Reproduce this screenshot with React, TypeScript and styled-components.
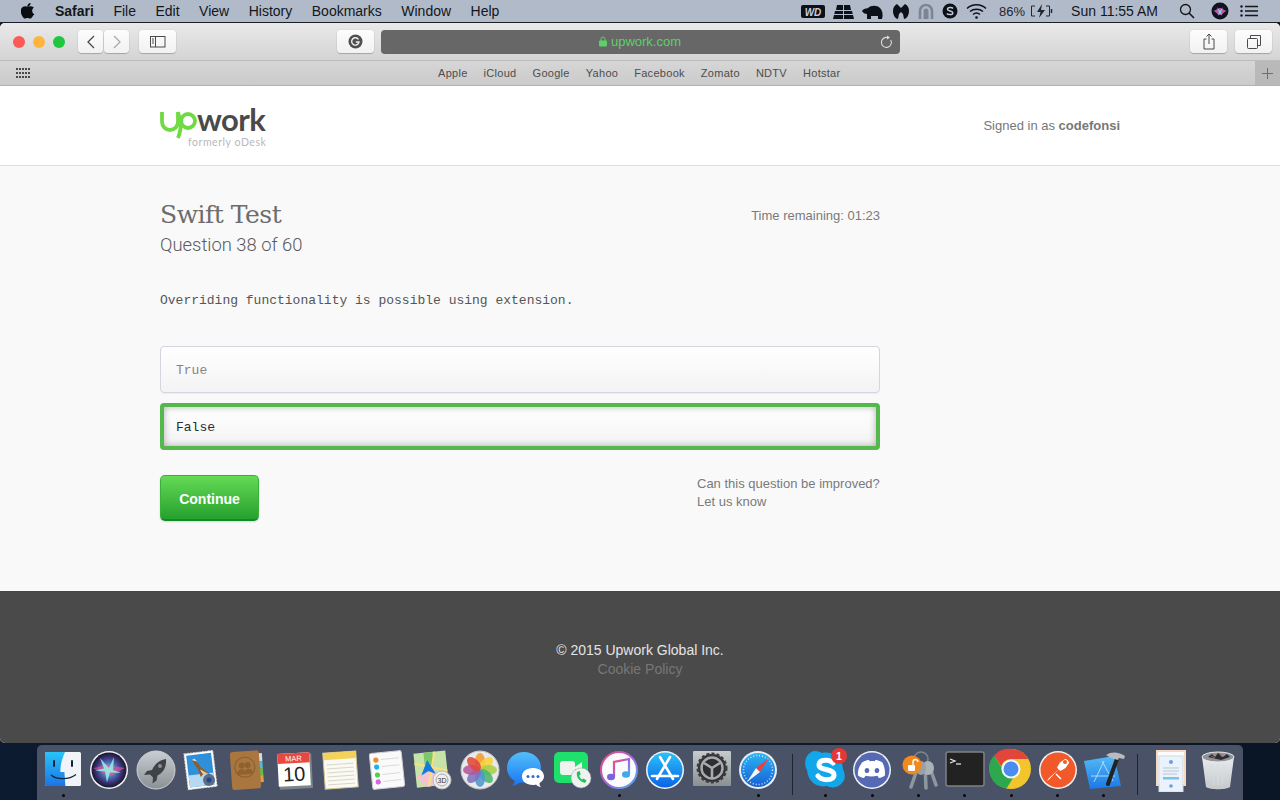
import React from 'react';
import styled, { createGlobalStyle } from 'styled-components';

const Global = createGlobalStyle`
  html, body { margin: 0; padding: 0; width: 1280px; height: 800px; overflow: hidden; }
  body { background: #0c1a2c; font-family: "Liberation Sans", Arial, sans-serif; }
  * { box-sizing: border-box; }
`;

const Screen = styled.div`
  width: 1280px; height: 800px; display: flex; flex-direction: column;
  background: linear-gradient(100deg, #0b1a2e 0%, #0d1c30 50%, #0a1526 100%);
  overflow: hidden;
`;

/* ---------- menu bar ---------- */
const MenuBar = styled.header`
  height: 22px; flex: none; display: flex; align-items: center;
  background: #b1bac9; color: #14161a; font-size: 14px; padding: 0 22px 0 21px;
  border-bottom: 1px solid #1b1e24;
  box-sizing: content-box;
`;
const MenuList = styled.nav`display: flex; align-items: center; gap: 19.5px; margin-left: 20px;`;
const MenuItem = styled.span<{ $strong?: boolean }>`
  font-weight: ${p => (p.$strong ? 700 : 400)};
  white-space: nowrap;
`;
const StatusArea = styled.div`margin-left: auto; display: flex; align-items: center; gap: 8px;`;
const StatusText = styled.span`font-size: 13px; color: #23262c; white-space: nowrap; margin: 0 -3px 0 4px;`;
const Clock = styled.span`font-size: 14px; color: #14161a; margin: 0 13px 0 10px; white-space: nowrap;`;
const SiriMark = styled.svg`margin: 0 3px 0 8px;`;

/* ---------- window ---------- */
const Window = styled.div`
  height: 720px; flex: none; display: flex; flex-direction: column;
  border-radius: 5px 5px 5px 5px; overflow: hidden; background: #f9f9f9;
`;
const Toolbar = styled.div`
  height: 38px; flex: none; display: flex; align-items: center; padding: 0 8px 0 13px;
  background: linear-gradient(#e9e9e9, #d4d4d4);
  border-bottom: 1px solid #bdbdbd;
`;
const Lights = styled.div`display: flex; gap: 8px; margin-right: 13px;`;
const Light = styled.span<{ $c: string }>`
  width: 12px; height: 12px; border-radius: 50%; background: ${p => p.$c};
`;
const ToolButton = styled.button<{ $w?: number; $ml?: number }>`
  width: ${p => p.$w ?? 37}px; height: 23px; margin: 0 0 0 ${p => p.$ml ?? 0}px; padding: 0;
  display: flex; align-items: center; justify-content: center;
  background: linear-gradient(#fdfdfd, #f1f1f1); border: 0; border-radius: 4px;
  box-shadow: 0 1px 1px rgba(0,0,0,.22), 0 0 0 .5px rgba(0,0,0,.06);
`;
const AddressBar = styled.div`
  width: 519px; height: 24px; margin-left: 7px; position: relative; flex: none;
  display: flex; align-items: center; justify-content: center; gap: 3px; padding-right: 2px;
  background: #676767; border-radius: 4px; color: #5fd068; font-size: 13px;
`;
const Reload = styled.span`position: absolute; right: 6px; top: 5px; display: flex;`;

const BookmarkBar = styled.div`
  height: 25px; flex: none; display: flex; align-items: center; position: relative;
  background: linear-gradient(#d6d6d6, #cbcbcb); border-bottom: 1px solid #b2b2b2;
  padding-left: 16px;
`;
const Bookmarks = styled.div`
  display: flex; gap: 16px; margin-left: 408px; font-size: 11px; color: #4d4d4d; letter-spacing: .29px;
`;
const AddTab = styled.div`
  margin-left: auto; width: 25px; height: 100%; background: #b9b9b9;
  display: flex; align-items: center; justify-content: center;
`;

/* ---------- page ---------- */
const Page = styled.main`flex: 1; display: flex; flex-direction: column; min-height: 0;`;
const SiteHeader = styled.div`
  height: 80px; flex: none; background: #fff; border-bottom: 1px solid #dedede;
  display: flex; align-items: center; justify-content: space-between; padding: 0 160px;
`;
const Logo = styled.div`position: relative; width: 108px; height: 44px; margin-top: 4px;`;
const LogoMark = styled.svg`position: absolute; left: 0; top: 0;`;
const LogoWord = styled.span`
  position: absolute; left: 37px; top: 1px; font: 700 31px/24px "Lato", "Noto Sans", sans-serif;
  color: #4a4a4a; letter-spacing: -.6px;
`;
const LogoSub = styled.span`
  position: absolute; left: 28px; top: 29px; font: 400 10.5px/14px "Lato", "Noto Sans", sans-serif;
  color: #b9b9b9; letter-spacing: .55px; white-space: nowrap;
`;
const Signed = styled.div`font-size: 13px; color: #777; margin-top: -1px;`;
const Body = styled.section`
  flex: 1; background: #f9f9f9; padding: 31px 0 0 160px;
`;
const Column = styled.div`width: 720px;`;
const TitleRow = styled.div`display: flex; justify-content: space-between; align-items: flex-start;`;
const Title = styled.h1`
  margin: 0; font: 400 25px/35px "DejaVu Serif", serif; color: #6c6c6c; letter-spacing: -.5px;
`;
const Subtitle = styled.h2`
  margin: 0; font: 300 18.4px/25px "Roboto", "Liberation Sans", sans-serif; color: #5a5a5a;
`;
const Timer = styled.div`font-size: 13px; line-height: 16px; color: #7a7a7a; margin-top: 11px;`;
const Prompt = styled.p`
  margin: 36px 0 0; font: 400 13px/16px "Liberation Mono", monospace; color: #555;
`;
const Options = styled.div`margin-top: 37px; display: flex; flex-direction: column; gap: 10px;`;
const Option = styled.div<{ $selected?: boolean }>`
  height: 47px; display: flex; align-items: center; padding: 2px 0 0 ${p => (p.$selected ? 12 : 15)}px;
  font: 400 13px/16px "Liberation Mono", monospace;
  border-radius: 4px;
  color: ${p => (p.$selected ? '#2b2b2b' : '#858585')};
  background: linear-gradient(#ffffff, #f3f3f3);
  border: ${p => (p.$selected ? '4px solid #55b84d' : '1px solid #d3d6de')};
  box-shadow: ${p => (p.$selected ? 'inset 0 0 7px rgba(0,0,0,.3)' : '0 1px 1px rgba(0,0,0,.05)')};
`;
const ActionRow = styled.div`margin-top: 25px; display: flex; justify-content: space-between; align-items: flex-start;`;
const Continue = styled.button`
  width: 99px; height: 46px; border: 1px solid #3cae3c; border-bottom: 2px solid #128a28; border-radius: 5px;
  background: linear-gradient(#65da55, #26a02e); color: #fff; padding: 2px 0 0;
  font: 700 14px/1 "Liberation Sans", sans-serif;
  box-shadow: 0 1px 2px rgba(0,0,0,.15);
`;
const Help = styled.div`
  width: 183px; font-size: 13px; line-height: 18px; color: #7a7a7a; white-space: nowrap;
`;
const Footer = styled.footer`
  height: 152px; flex: none; background: #4a4a4a; text-align: center; padding-top: 49px;
  font-size: 14px; line-height: 19px; color: #e4e4e4;
  border-top: 1px solid #454545;
`;
const FooterLink = styled.div`color: #777;`;

/* ---------- dock ---------- */
const DockRow = styled.div`flex: 1; display: flex; justify-content: center; align-items: flex-end;`;
const Dock = styled.nav`
  width: 1206px; height: 55px; display: flex; align-items: flex-start; padding: 3px 3px 0;
  background: #4a5268; border-radius: 5px 5px 0 0;
`;
const Slot = styled.div<{ $open?: boolean }>`
  width: 46.33px; flex: none; height: 52px; position: relative; display: flex; justify-content: center;
  &::after {
    content: ''; display: ${p => (p.$open ? 'block' : 'none')};
    position: absolute; left: 50%; bottom: 3px; width: 3px; height: 3px; margin-left: -1.5px; border-radius: 50%; background: #050505;
  }
`;
const DockDivider = styled.div`
  width: 21.5px; height: 41px; flex: none; margin-top: 6px; display: flex; justify-content: center;
  &::before { content: ''; width: 1px; background: #1f2431; }
`;

const I = ({ children, w = 44, h = 44, vb }: { children: React.ReactNode; w?: number; h?: number; vb?: string }) => (
  <svg width={w} height={h} viewBox={vb ?? `0 0 ${w} ${h}`} fill="none">{children}</svg>
);

const Finder = () => (
  <I>
    <defs><linearGradient id="fa" x1="0" y1="0" x2="0" y2="1"><stop offset="0" stopColor="#28c4f6" /><stop offset="1" stopColor="#1b74e8" /></linearGradient></defs>
    <rect x="4" y="4" width="36" height="34" rx="1.5" fill="#f0f4f8" />
    <path d="M4 5.5A1.5 1.5 0 0 1 5.500 4H24c-3 7-5 14-4.600 20h4l1 14H5.500A1.500 1.500 0 0 1 4 36.500z" fill="url(#fa)" />
    <path d="M13 13v5M31 13v5" stroke="#15233a" strokeWidth="2" strokeLinecap="round" />
    <path d="M10 27c6 5 18 5 25-.5" stroke="#15233a" strokeWidth="1.300" />
  </I>
);
const Siri = () => (
  <I>
    <defs>
      <radialGradient id="si"><stop offset="0" stopColor="#9af0e8" /><stop offset=".35" stopColor="#4f7fc8" /><stop offset=".75" stopColor="#3a2f70" /><stop offset="1" stopColor="#14182c" /></radialGradient>
    </defs>
    <circle cx="22" cy="22" r="19" fill="#f2f2f2" /><circle cx="22" cy="22" r="17.500" fill="url(#si)" />
    <path d="M6 20c6 0 11-5 16-3 4 1 10 2 16 3-6 2-11 9-16 8-5-1-10-6-16-8z" fill="#e0509f" opacity=".7" />
    <path d="M13 10l9 10 5-11-1 13 8 3-11-.5-3 10-2-11-10-1 9-2z" fill="#92f3e0" opacity=".85" />
  </I>
);
const Rocket = () => (
  <I>
    <defs><linearGradient id="ro" x1="0" y1="0" x2="0" y2="1"><stop offset="0" stopColor="#c9cdd1" /><stop offset="1" stopColor="#8a9094" /></linearGradient></defs>
    <circle cx="22" cy="22" r="19" fill="url(#ro)" stroke="#cfd2d4" />
    <path d="M32 11c-7 1-11 5-14 11l-5 1-3 4 6-.5 3 3-.5 6 4-3 1-5c6-3 9-8 8.500-16.500z" fill="#3f4347" />
    <circle cx="26" cy="18" r="2" fill="#8b9094" />
  </I>
);
const Mail = () => (
  <I>
    <g transform="rotate(-7 21 22)">
      <rect x="6" y="4" width="29" height="36" fill="#fff" stroke="#d8d8d8" strokeDasharray="2 1" />
      <rect x="8" y="6" width="25" height="32" fill="#2f8fd8" />
      <rect x="8" y="26" width="25" height="12" fill="#b6d8f0" />
      <path d="M13 11c3 1 6 3 8 8l9 9-7-2-3 3-2-8z" fill="#8f5a2c" />
      <path d="M13 11l3-1 2 3z" fill="#f0e4c8" />
      <path d="M20 21l8 6-6-1z" fill="#e8d2a6" />
    </g>
    <circle cx="29" cy="32" r="6" fill="#3a4a68" opacity=".75" />
    <circle cx="29" cy="32" r="2.500" fill="#20468c" />
  </I>
);
const Contacts = () => (
  <I>
    <g transform="rotate(-4 22 22)">
      <rect x="33" y="6" width="4" height="8" fill="#d8d8d8" /><rect x="33" y="14" width="4" height="7" fill="#5bb6ce" />
      <rect x="33" y="21" width="4" height="7" fill="#70b54a" /><rect x="33" y="28" width="4" height="7" fill="#e0a23c" />
      <rect x="5" y="3" width="29" height="38" rx="2.500" fill="#a9763f" />
      <circle cx="19" cy="19" r="10" stroke="#8f6030" strokeWidth="1.200" />
      <circle cx="16" cy="17" r="3" fill="#8f6030" /><circle cx="22" cy="17" r="3" fill="#8f6030" />
      <path d="M11 26c0-7 9-7 9 0zM18 26c0-7 9-7 9 0z" fill="#8f6030" />
    </g>
  </I>
);
const Calendar = () => (
  <I>
    <g transform="rotate(-3 22 22)">
      <rect x="6" y="6" width="33" height="35" fill="#7c8589" />
      <rect x="5" y="5" width="32" height="33" fill="#fff" />
      <rect x="5" y="5" width="32" height="10" fill="#e8483f" />
      <text x="21" y="13" textAnchor="middle" fontFamily="Liberation Sans" fontSize="7.500" fill="#fff">MAR</text>
      <text x="21" y="33" textAnchor="middle" fontFamily="Liberation Sans" fontSize="20" fill="#222">10</text>
    </g>
  </I>
);
const Notes = () => (
  <I>
    <g transform="rotate(-4 22 22)">
      <rect x="5" y="4" width="33" height="36" fill="#fbfaf2" stroke="#d3c692" />
      <rect x="5" y="4" width="33" height="7" fill="#f4d15a" />
      <path d="M8 16h27M8 20h27M8 24h27M8 28h27M8 32h27M8 36h27" stroke="#c9c7bb" strokeWidth=".7" />
    </g>
  </I>
);
const Reminders = () => (
  <I>
    <g transform="rotate(-6 22 22)">
      <rect x="6" y="4" width="32" height="36" rx="2" fill="#fafafa" stroke="#cfcfcf" />
      <circle cx="12" cy="11" r="2.600" fill="#f08a2a" /><circle cx="12" cy="18" r="2.600" fill="#1eb2ee" />
      <circle cx="12" cy="26" r="2.600" fill="#4fd04a" /><circle cx="12" cy="33" r="2.600" fill="#d268dc" />
      <path d="M17 11h18M17 18h18M17 26h18M17 33h18" stroke="#dadada" />
    </g>
  </I>
);
const Maps = () => (
  <I>
    <g transform="rotate(-6 20 20)">
      <rect x="3" y="4" width="32" height="34" fill="#c6e4a8" />
      <path d="M13 4h9v15H13z" fill="#7ec86c" /><path d="M3 28L22 16l4 22H12z" fill="#f2c4cf" />
      <path d="M3 14l32 10M24 4L15 38" stroke="#f7e27e" strokeWidth="2" />
      <path d="M16 15l4 8-4-2-4 2z" fill="#1478e0" stroke="#1478e0" strokeWidth="3" />
    </g>
    <circle cx="30" cy="32" r="9" fill="#eee" stroke="#bbb" />
    <circle cx="30" cy="32" r="6" stroke="#aaa" />
    <text x="30" y="35" textAnchor="middle" fontFamily="Liberation Sans" fontSize="7" fill="#333">3D</text>
  </I>
);
const Photos = () => (
  <I>
    <circle cx="22" cy="22" r="19" fill="#e9e9e9" stroke="#c4c4c4" />
    {['#f59a2c','#f7d13c','#a8cf48','#4bb56c','#4d97d2','#7b73bf','#b4579c','#e0483c'].map((c, i) => (
      <ellipse key={c} cx="22" cy="13.500" rx="5" ry="8.500" fill={c} opacity=".88" transform={`rotate(${i * 45} 22 22)`} />
    ))}
  </I>
);
const Messages = () => (
  <I>
    <defs><linearGradient id="me" x1="0" y1="0" x2="0" y2="1"><stop offset="0" stopColor="#52c0fb" /><stop offset="1" stopColor="#1a76f2" /></linearGradient></defs>
    <path d="M20 4C10 4 3 11 3 20c0 6 3 10 8 13-.5 2-2 3.500-3 4.500 4 0 6-1.500 8-3 8 1.500 21-3 21-14.500C37 11 30 4 20 4z" fill="url(#me)" />
    <path d="M29 20c-7 0-11 4-11 8.500S22 37 29 37c1 0 2 0 3-.5 1 1.500 3 2.500 5 2.500-1-1-1.500-2-1.500-4 2.500-1.500 4.500-3.500 4.500-6.500C40 24 36 20 29 20z" fill="#fff" />
    <circle cx="24" cy="28.500" r="1.500" fill="#2a6bd8" /><circle cx="29" cy="28.500" r="1.500" fill="#2a6bd8" /><circle cx="34" cy="28.500" r="1.500" fill="#2a6bd8" />
  </I>
);
const FaceTime = () => (
  <I>
    <rect x="3" y="4" width="34" height="31" rx="5" fill="#1ee06a" />
    <rect x="9" y="13" width="15" height="14" rx="3" fill="#eef3ef" />
    <path d="M24 19l7-5v12l-7-5z" fill="#eef3ef" />
    <circle cx="30" cy="30" r="10" fill="#f0f2f0" stroke="#9ca3a0" strokeWidth=".5" />
    <path d="M26 24c-1 5 2 9 8 11l1.500-2.500-3-2-1.500 1c-1.500-1-2.500-2.500-2.800-4l1.500-1-1-3.500z" fill="#23c15a" />
  </I>
);
const Music = () => (
  <I>
    <defs><linearGradient id="mu" x1="0" y1="0" x2="1" y2="1"><stop offset="0" stopColor="#f0506e" /><stop offset=".5" stopColor="#a95fe0" /><stop offset="1" stopColor="#44b6f0" /></linearGradient></defs>
    <circle cx="22" cy="22" r="18" fill="#fbfbfb" stroke="url(#mu)" strokeWidth="2" />
    <path d="M17 29V14l15-3v15" stroke="url(#mu)" strokeWidth="2.200" />
    <ellipse cx="14" cy="29" rx="4" ry="3.300" fill="#7a63d8" /><ellipse cx="29" cy="26.500" rx="4" ry="3.300" fill="#44a6ec" />
  </I>
);
const AppStore = () => (
  <I>
    <defs><linearGradient id="ap" x1="0" y1="0" x2="0" y2="1"><stop offset="0" stopColor="#2ac2fa" /><stop offset="1" stopColor="#0b63e6" /></linearGradient></defs>
    <circle cx="22" cy="22" r="19" fill="#f0f4f8" /><circle cx="22" cy="22" r="17.500" fill="url(#ap)" />
    <path d="M27 9L14 31M17 9l13 22M9 28h26" stroke="#fff" strokeWidth="2.600" strokeLinecap="round" />
  </I>
);
const Prefs = () => (
  <I>
    <defs><linearGradient id="pr" x1="0" y1="0" x2="0" y2="1"><stop offset="0" stopColor="#c6cbcd" /><stop offset="1" stopColor="#8b9193" /></linearGradient></defs>
    <rect x="3" y="3" width="38" height="35" rx="1" fill="url(#pr)" />
    <circle cx="22" cy="20" r="14" fill="#2f2f31" stroke="#3c3c3e" strokeWidth="3" strokeDasharray="3 2" />
    <circle cx="22" cy="20" r="10.500" stroke="#a7abad" strokeWidth="2.500" />
    <path d="M22 20l-8-5M22 20l8-5M22 20v10" stroke="#a7abad" strokeWidth="2.600" />
  </I>
);
const SafariIcon = () => (
  <I>
    <defs><linearGradient id="sa" x1="0" y1="0" x2="0" y2="1"><stop offset="0" stopColor="#2cb4f4" /><stop offset="1" stopColor="#1560d4" /></linearGradient></defs>
    <circle cx="22" cy="22" r="19" fill="#e8eef2" /><circle cx="22" cy="22" r="17" fill="url(#sa)" />
    <circle cx="22" cy="22" r="14.500" stroke="#cfe6f8" strokeWidth="1.500" strokeDasharray="1 2" />
    <path d="M33 10L20 20l4 4z" fill="#ee4036" /><path d="M11 34l13-10-4-4z" fill="#f5f5f5" />
  </I>
);
const SkypeIcon = () => (
  <I w={46} h={44}>
    <g transform="translate(1 0)">
      <path d="M11 3c3 0 5 1 7 2 9-2 20 3 21 16 3 7 2 11-1 14-3 4-9 6-15 3-10 2-19-4-20-16-3-5-2-10 0-14 2-3 5-5 8-5z" fill="#11a7ea" />
      <path d="M29 15c-3-4-14-4-14 2 0 6 15 3 15 10 0 6-12 6-16 1" stroke="#fff" strokeWidth="5" strokeLinecap="round" />
      <circle cx="35" cy="8" r="8" fill="#e43838" />
      <text x="35" y="12" textAnchor="middle" fontFamily="Liberation Sans" fontSize="10.500" fontWeight="700" fill="#fff">1</text>
    </g>
  </I>
);
const Discord = () => (
  <I>
    <circle cx="22" cy="22" r="19" fill="#f0f2f6" /><circle cx="22" cy="22" r="17.500" fill="#5669b4" />
    <path d="M12 15c3-2 6-2.500 7-2.500l.7 1.300c2-.3 3-.3 5 0l.7-1.300c1 0 4 .5 7 2.500 2 4 3 8 2.500 13-2 1.500-4 2.300-6 2.500l-1.500-2.300c-4 1-8 1-11.800 0L14 30.500c-2-.2-4-1-6-2.500-.5-5 1-9 4-13z" fill="#fff" transform="translate(0 -.5)" />
    <ellipse cx="17" cy="22.500" rx="2.300" ry="2.600" fill="#5669b4" /><ellipse cx="27" cy="22.500" rx="2.300" ry="2.600" fill="#5669b4" />
  </I>
);
const Keys = () => (
  <I>
    <circle cx="24" cy="11" r="7" stroke="#7d8790" strokeWidth="1.500" />
    <path d="M22 16l-8 23M28 17l1 23M32 17l7 20" stroke="#8e979e" strokeWidth="3.500" strokeLinecap="round" />
    <ellipse cx="31" cy="20" rx="6" ry="7" fill="#aab2b8" />
    <ellipse cx="24" cy="20" rx="5" ry="7" fill="#98a1a8" />
    <circle cx="15" cy="17" r="9.500" fill="#f08a1e" />
    <rect x="11" y="17" width="7" height="6" rx="1" fill="#fff" />
    <path d="M16 17v-3a2.500 2.500 0 0 1 5 0" stroke="#fff" strokeWidth="1.300" />
  </I>
);
const Terminal = () => (
  <I>
    <rect x="3" y="4" width="38" height="34" rx="2" fill="#222" stroke="#7d8385" strokeWidth="1.500" />
    <path d="M7 11l5 2-5 2" stroke="#eee" strokeWidth="1.200" />
    <path d="M13 16h5" stroke="#eee" strokeWidth="1.200" />
  </I>
);
const Chrome = () => (
  <I>
    <circle cx="22" cy="21" r="20" fill="#f3c52c" />
    <path d="M22 1a20 20 0 0 1 17.300 10H22a10 10 0 0 0-9.700 7.500L5 7.500A20 20 0 0 1 22 1z" fill="#e2463a" />
    <path d="M5 7.500a20 20 0 0 0 12.500 33l7.500-12a10 10 0 0 1-12.700-9.500z" fill="#2da84f" />
    <circle cx="22" cy="21" r="9.500" fill="#f6f6f6" /><circle cx="22" cy="21" r="7.500" fill="#4a8cf0" />
  </I>
);
const Postman = () => (
  <I>
    <circle cx="22" cy="22" r="19" fill="#f2f2f2" /><circle cx="22" cy="22" r="17.500" fill="#f1592a" />
    <path d="M11 33l1.500-2.500 10-9-1.500-2 3-5 5-3.500c2 0 4 2 4 4l-3.500 5-5 3-2-1.500-9.500 10z" fill="#fff" />
    <circle cx="29" cy="14" r="2" fill="#f1592a" />
    <path d="M20 26l5 5" stroke="#fff" strokeWidth="1.400" />
  </I>
);
const Xcode = () => (
  <I>
    <defs><linearGradient id="xc" x1="0" y1="0" x2="0" y2="1"><stop offset="0" stopColor="#53baf5" /><stop offset="1" stopColor="#1b78e8" /></linearGradient></defs>
    <path d="M2 13l30-5 7 30-31 3z" fill="url(#xc)" />
    <path d="M22 13L12 34M20 13l11 20M9 28h24" stroke="#a8dcfb" strokeWidth="1" />
    <path d="M36 8L26 36" stroke="#222" strokeWidth="4" strokeLinecap="round" />
    <path d="M24 7c6-4 13-3 19 1l-1 3-5-1-1 2-7-2z" fill="#b8bcbe" />
  </I>
);
const PreviewDoc = () => (
  <I>
    <rect x="6" y="2" width="30" height="36" fill="#f6d8c4" /><rect x="8" y="4" width="26" height="32" fill="#fbfbfb" />
    <rect x="9" y="8" width="24" height="36" fill="#eaf2fb" stroke="#d2d9e2" />
    <circle cx="21" cy="14" r="2" fill="#6c9fdd" />
    <path d="M13 20h16M13 23h16M13 26h14" stroke="#bbc7d6" />
    <rect x="13" y="29" width="16" height="2.500" fill="#7cc0ee" />
    <circle cx="21" cy="38" r="1.800" fill="#6c9fdd" />
  </I>
);
const Trash = () => (
  <I>
    <defs><linearGradient id="tr" x1="0" y1="0" x2="0" y2="1"><stop offset="0" stopColor="#e8eaec" /><stop offset="1" stopColor="#c5c9cc" /></linearGradient></defs>
    <path d="M6 9l4 30c4 3 20 3 24 0l4-30z" fill="url(#tr)" />
    <ellipse cx="22" cy="9" rx="16" ry="5" fill="#8f9498" stroke="#e9ebec" />
    <path d="M12 9l4-3 3 3 3-4 5 4 4-3 3 3-9 3z" fill="#2a2d33" />
    <path d="M15 8l4 2M24 6l2 3" stroke="#c95b4c" />
    <path d="M16 16l2 21M22 16v21M28 16l-2 21" stroke="#d9dcde" />
  </I>
);

/* ---------- toolbar / status glyphs ---------- */
const AppleLogo = () => (
  <svg width="14" height="16" viewBox="0 0 170 200" fill="#0c0d10">
    <path d="M150 152c-3 7-6 13-10 19-5 8-10 13-13 16-5 5-11 7-17 7-4 0-9-1-15-4-6-2-11-4-16-4s-11 1-17 4c-6 2-10 4-14 4-6 0-12-2-18-8-4-3-9-9-14-17-6-9-11-19-15-31-4-13-6-25-6-37 0-14 3-25 9-35 5-8 11-14 19-19s16-7 25-7c5 0 11 1 19 4s13 5 15 5c2 0 7-2 17-5 9-3 16-4 23-4 16 1 29 8 37 20-15 9-22 22-22 38 0 13 5 23 14 32 4 4 9 7 14 9-1 3-3 6-5 10zM117 3c0 10-4 19-11 28-9 10-19 16-30 15v-4c0-9 4-19 11-27 4-4 8-8 14-11 6-3 11-4 16-4v3z" />
  </svg>
);
const Glyph = ({ w, children }: { w: number; children: React.ReactNode }) => (
  <svg width={w} height="18" viewBox={`0 0 ${w} 18`} fill="none">{children}</svg>
);

const bookmarks = ['Apple', 'iCloud', 'Google', 'Yahoo', 'Facebook', 'Zomato', 'NDTV', 'Hotstar'];
const menus = ['File', 'Edit', 'View', 'History', 'Bookmarks', 'Window', 'Help'];

const dockLeft: [React.FC, boolean][] = [
  [Finder, true], [Siri, false], [Rocket, false], [Mail, false], [Contacts, false], [Calendar, false], [Notes, false],
  [Reminders, false], [Maps, false], [Photos, false], [Messages, false], [FaceTime, false], [Music, true], [AppStore, false],
  [Prefs, false], [SafariIcon, true],
];
const dockMid: [React.FC, boolean][] = [
  [SkypeIcon, true], [Discord, true], [Keys, true], [Terminal, true], [Chrome, true], [Postman, true], [Xcode, true],
];
const dockRight: [React.FC, boolean][] = [[PreviewDoc, false], [Trash, false]];

const renderSlots = (list: [React.FC, boolean][]) =>
  list.map(([Icon, open], i) => (
    <Slot key={i} $open={open}><Icon /></Slot>
  ));

export default function App() {
  return (
    <Screen>
      <Global />
      <MenuBar>
        <AppleLogo />
        <MenuList>
          <MenuItem $strong>Safari</MenuItem>
          {menus.map(m => <MenuItem key={m}>{m}</MenuItem>)}
        </MenuList>
        <StatusArea>
          <Glyph w={24}>
            <rect x="0" y="3" width="24" height="13" rx="2" fill="#0c1018" />
            <text x="12" y="13.500" textAnchor="middle" fontFamily="Liberation Sans" fontSize="10" fontWeight="700" fontStyle="italic" fill="#c9ced8">WD</text>
          </Glyph>
          <Glyph w={21}>
            <path d="M4 3h13l1 5H3zM2 9h17l2 8H0z" fill="#0c1018" /><path d="M10.500 3v14M0 12.500h21" stroke="#b1bac9" strokeWidth="1" />
          </Glyph>
          <Glyph w={22}>
            <path d="M0 9c2-3 4-2 6-3 3-3 9-3 12 0 3 3 3 8 2 11h-4v-3H9v3H5v-5c-2 0-4-1-5-3z" fill="#0c1018" />
          </Glyph>
          <Glyph w={18}>
            <path d="M1 9c0-4 2-6 4-7l4 4 4-4c2 1 4 3 4 7 0 5-3 8-5 8l-1-5-2-2-2 2-1 5c-2 0-5-3-5-8z" fill="#0c1018" />
          </Glyph>
          <Glyph w={16}>
            <path d="M2 17V9a6 6 0 0 1 12 0v8" stroke="#7d8591" strokeWidth="2.600" /><path d="M5.500 17V9a2.500 2.500 0 0 1 5 0v8z" fill="#7d8591" />
          </Glyph>
          <Glyph w={16}>
            <circle cx="8" cy="9" r="7.500" fill="#0c1018" />
            <path d="M11 6.500C10 5 5.500 5 5.500 7.200c0 2.300 5.300 1.300 5.300 3.700 0 2.200-4.500 2.200-6 .5" stroke="#c3cad6" strokeWidth="1.500" />
          </Glyph>
          <Glyph w={21}>
            <path d="M1 6.500c5-5 14-5 19 0M4 9.500c3.500-3 9.500-3 13 0M7 12.500c2-1.700 5-1.700 7 0" stroke="#0c1018" strokeWidth="1.500" /><circle cx="10.500" cy="15.500" r="1.300" fill="#0c1018" />
          </Glyph>
          <StatusText>86%</StatusText>
          <Glyph w={23}>
            <path d="M5 4H1.500v10H5M16 4h3.500v10H16" stroke="#23262c" /><path d="M21.500 7v4" stroke="#23262c" strokeWidth="1.500" />
            <path d="M12 2L7 10h3.500L9 16l6-8h-4z" fill="#23262c" />
          </Glyph>
          <Clock>Sun 11:55 AM</Clock>
          <Glyph w={16}>
            <circle cx="6.500" cy="7.500" r="5" stroke="#14161a" strokeWidth="1.300" /><path d="M10 11l5 5" stroke="#14161a" strokeWidth="1.600" />
          </Glyph>
          <SiriMark width="18" height="18" viewBox="0 0 18 18">
            <circle cx="9" cy="9" r="8.500" fill="#10121d" />
            <path d="M2 9c3 0 4-3 7-3s4 3 7 3c-3 0-4 4-7 4S5 9 2 9z" fill="#c558a6" />
            <path d="M6 5l3 4 3-4-2 5 1 4-2-3-2 3 1-4z" fill="#78dfe2" />
          </SiriMark>
          <Glyph w={18}>
            <path d="M5 4.500h13M5 9h13M5 13.500h13" stroke="#14161a" strokeWidth="1.600" />
            <circle cx="1.500" cy="4.500" r="1.200" fill="#14161a" /><circle cx="1.500" cy="9" r="1.200" fill="#14161a" /><circle cx="1.500" cy="13.500" r="1.200" fill="#14161a" />
          </Glyph>
        </StatusArea>
      </MenuBar>

      <Window>
        <Toolbar>
          <Lights>
            <Light $c="#fb5b57" /><Light $c="#fdb53f" /><Light $c="#1fc63f" />
          </Lights>
          <ToolButton $w={25} aria-label="Back">
            <svg width="10" height="14" viewBox="0 0 10 14" fill="none"><path d="M8 1L2 7l6 6" stroke="#4a4a4a" strokeWidth="1.300" /></svg>
          </ToolButton>
          <ToolButton $w={25} $ml={1} aria-label="Forward">
            <svg width="10" height="14" viewBox="0 0 10 14" fill="none"><path d="M2 1l6 6-6 6" stroke="#a9a9a9" strokeWidth="1.300" /></svg>
          </ToolButton>
          <ToolButton $ml={10} aria-label="Sidebar">
            <svg width="16" height="12" viewBox="0 0 16 12" fill="none"><rect x=".5" y=".5" width="14.500" height="10.500" stroke="#4a4a4a" /><path d="M5.500 1v10" stroke="#4a4a4a" /><path d="M2 3h2M2 5h2M2 7h2" stroke="#4a4a4a" /></svg>
          </ToolButton>
          <ToolButton $ml={161} aria-label="Grammarly">
            <svg width="15" height="15" viewBox="0 0 15 15" fill="none"><circle cx="7.500" cy="7.500" r="7" fill="#4f4f4f" /><path d="M10.500 5.500A3.700 3.700 0 1 0 11 8H7.800" stroke="#efefef" strokeWidth="1.400" /></svg>
          </ToolButton>
          <AddressBar>
            <svg width="10" height="11" viewBox="0 0 10 11"><rect x="1" y="4.500" width="8" height="6" rx="1" fill="#5fd068" /><path d="M3 5V3a2 2 0 0 1 4 0v2" stroke="#5fd068" fill="none" /></svg>
            upwork.com
            <Reload>
              <svg width="14" height="14" viewBox="0 0 14 14" fill="none"><path d="M10.800 5A5 5 0 1 1 7.500 2.500" stroke="#dedede" strokeWidth="1.100" /><path d="M7 .5l3 2-3 2z" fill="#dedede" /></svg>
            </Reload>
          </AddressBar>
          <ToolButton $ml={290} aria-label="Share">
            <svg width="12" height="17" viewBox="0 0 12 17" fill="none"><path d="M3.500 6H1v10h10V6H8.500" stroke="#4a4a4a" /><path d="M6 11V1M3.500 3.500L6 1l2.500 2.500" stroke="#4a4a4a" /></svg>
          </ToolButton>
          <ToolButton $ml={8} aria-label="Tabs">
            <svg width="14" height="14" viewBox="0 0 14 14" fill="none"><rect x=".5" y="3.500" width="10" height="10" rx="1" stroke="#4a4a4a" /><path d="M3.500 3V.5h10v10H11" stroke="#4a4a4a" /></svg>
          </ToolButton>
        </Toolbar>
        <BookmarkBar>
          <svg width="14" height="11" viewBox="0 0 14 11" fill="#4a4a4a">
            {[0, 4, 8].flatMap(y => [0, 3, 6, 9, 12].map(x => <rect key={`${x}-${y}`} x={x} y={y} width="2" height="2" />))}
          </svg>
          <Bookmarks>{bookmarks.map(b => <span key={b}>{b}</span>)}</Bookmarks>
          <AddTab>
            <svg width="11" height="11" viewBox="0 0 11 11"><path d="M5.500 0v11M0 5.500h11" stroke="#6d6d6d" /></svg>
          </AddTab>
        </BookmarkBar>

        <Page>
          <SiteHeader>
            <Logo>
              <LogoMark width="40" height="36" viewBox="0 0 40 36" fill="none">
                <path d="M2 6v10a8 8 0 0 0 16 0V6c1 5 2.500 8 4 9" stroke="#6fda44" strokeWidth="3.800" />
                <circle cx="28" cy="15" r="7" stroke="#6fda44" strokeWidth="3.800" />
                <path d="M21.500 14c-.5 7-1.500 13-3.500 18" stroke="#6fda44" strokeWidth="3.800" />
              </LogoMark>
              <LogoWord>work</LogoWord>
              <LogoSub>formerly oDesk</LogoSub>
            </Logo>
            <Signed>Signed in as <b>codefonsi</b></Signed>
          </SiteHeader>
          <Body>
            <Column>
              <TitleRow>
                <div>
                  <Title>Swift Test</Title>
                  <Subtitle>Question 38 of 60</Subtitle>
                </div>
                <Timer>Time remaining: 01:23</Timer>
              </TitleRow>
              <Prompt>Overriding functionality is possible using extension.</Prompt>
              <Options>
                <Option>True</Option>
                <Option $selected>False</Option>
              </Options>
              <ActionRow>
                <Continue>Continue</Continue>
                <Help>Can this question be improved?<br />Let us know</Help>
              </ActionRow>
            </Column>
          </Body>
          <Footer>
            © 2015 Upwork Global Inc.
            <FooterLink>Cookie Policy</FooterLink>
          </Footer>
        </Page>
      </Window>

      <DockRow>
        <Dock>
          {renderSlots(dockLeft)}
          <DockDivider />
          {renderSlots(dockMid)}
          <DockDivider />
          {renderSlots(dockRight)}
        </Dock>
      </DockRow>
    </Screen>
  );
}
